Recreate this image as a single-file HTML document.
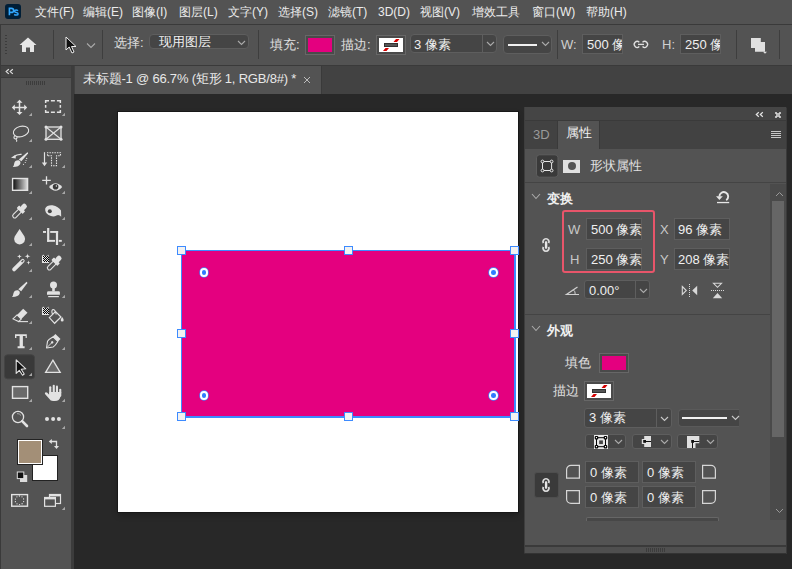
<!DOCTYPE html>
<html><head><meta charset="utf-8">
<style>
*{box-sizing:border-box;margin:0;padding:0}
html,body{width:792px;height:569px;overflow:hidden;background:#282828;font-family:"Liberation Sans",sans-serif;color:#e0e0e0}
.a{position:absolute}
.t{position:absolute;white-space:nowrap;font-size:12px;line-height:14px}
.m{color:#ececec}
#menubar{left:0;top:0;width:792px;height:24px;background:#535353}
#mline{left:0;top:24px;width:792px;height:1px;background:#3a3a3a}
#opts{left:0;top:25px;width:792px;height:40px;background:#535353}
#oline{left:0;top:64.8px;width:792px;height:1.2px;background:#3a3a3a}
#tool{left:1px;top:66px;width:70px;height:503px;background:#535353}
#toolhdr{left:1px;top:66px;width:70px;height:11.2px;background:#434343}
#tabbar{left:73.5px;top:66px;width:719px;height:28px;background:#424242}
#tab{left:74.5px;top:66px;width:246.5px;height:28px;background:#535353;border-right:1px solid #3a3a3a;width:247.5px}
#page{left:118px;top:112px;width:400px;height:400px;background:#fff;box-shadow:0 0 0 1px #181818,0 3px 6px rgba(0,0,0,0.25)}
#panel{left:524px;top:107px;width:263px;height:446px;background:#535353;border-radius:3px 3px 0 0;overflow:hidden}
</style></head><body>
<div id="menubar" class="a"></div>
<div id="mline" class="a"></div>
<div id="opts" class="a"></div>
<div id="oline" class="a"></div>
<div id="tool" class="a"></div>
<div id="toolhdr" class="a"></div>
<div id="tabbar" class="a"></div>
<div id="tab" class="a"></div>
<div id="page" class="a"></div>
<div id="panel" class="a"></div>

<!-- menu text -->
<div class="t m" style="left:35px;top:5px;font-size:12px">文件(F)</div>
<div class="t m" style="left:83px;top:5px">编辑(E)</div>
<div class="t m" style="left:132px;top:5px">图像(I)</div>
<div class="t m" style="left:179px;top:5px">图层(L)</div>
<div class="t m" style="left:228px;top:5px">文字(Y)</div>
<div class="t m" style="left:278px;top:5px">选择(S)</div>
<div class="t m" style="left:328px;top:5px">滤镜(T)</div>
<div class="t m" style="left:378px;top:5px">3D(D)</div>
<div class="t m" style="left:420px;top:5px">视图(V)</div>
<div class="t m" style="left:472px;top:5px">增效工具</div>
<div class="t m" style="left:532px;top:5px">窗口(W)</div>
<div class="t m" style="left:586px;top:5px">帮助(H)</div>

<!-- options bar -->
<div class="a" style="left:0;top:25px;width:1px;height:544px;background:#3a3a3a"></div>
<div class="a" style="left:5px;top:35px;width:2px;height:20px;background:repeating-linear-gradient(#3c3c3c 0 1px,transparent 1px 3px)"></div>
<svg class="a" style="left:19px;top:37px" width="18" height="16" viewBox="0 0 18 16"><path d="M9 0.5 L17.5 8 L15 8 L15 15 L11 15 L11 10.5 L7 10.5 L7 15 L3 15 L3 8 L0.5 8 Z" fill="#e6e6e6"/></svg>
<div class="a" style="left:53px;top:30px;width:1px;height:29px;background:#3e3e3e"></div>
<svg class="a" style="left:65px;top:36px" width="13" height="18" viewBox="0 0 13 18"><path d="M1 1 L1 14 L4.2 11 L7 17 L9 16 L6.5 10.5 L11 10.5 Z" fill="#111" stroke="#eee" stroke-width="1"/></svg>
<svg class="a" style="left:86px;top:42px" width="10" height="7" viewBox="0 0 10 7"><path d="M1 1.5 L5 5.5 L9 1.5" fill="none" stroke="#aaa" stroke-width="1.1"/></svg>
<div class="a" style="left:102px;top:30px;width:1px;height:29px;background:#3e3e3e"></div>
<div class="t" style="left:114px;top:35px;font-size:13px;line-height:15px">选择:</div>
<div class="a" style="left:149px;top:34px;width:100px;height:15px;background:#454545;border:1px solid #5e5e5e;border-radius:4px"></div>
<div class="t" style="left:159px;top:34px;font-size:13px;line-height:15px;color:#f0f0f0">现用图层</div>
<svg class="a" style="left:237px;top:40px" width="9" height="6" viewBox="0 0 9 6"><path d="M1 1 L4.5 4.5 L8 1" fill="none" stroke="#aaa" stroke-width="1.1"/></svg>
<div class="a" style="left:258px;top:30px;width:1px;height:29px;background:#3e3e3e"></div>
<div class="t" style="left:270px;top:37px;font-size:13px;line-height:15px">填充:</div>
<div class="a" style="left:305px;top:35px;width:30px;height:20px;background:#4a4a4a;border:1px solid #676767"></div>
<div class="a" style="left:308px;top:38px;width:24px;height:14px;background:#e4007f"></div>
<div class="t" style="left:341px;top:37px;font-size:13px;line-height:15px">描边:</div>
<div class="a" style="left:376px;top:35px;width:30px;height:20px;background:#4a4a4a;border:1px solid #676767"></div>
<div class="a" style="left:379px;top:38px;width:24px;height:14px;background:#fff"></div>
<svg class="a" style="left:379px;top:38px" width="24" height="14" viewBox="0 0 24 14"><rect x="5.5" y="5.5" width="13" height="3" fill="#555" stroke="#333" stroke-width="1"/><path d="M14.5 3.9 L17 1 L20.5 1 L18 3.9 Z M4 12.9 L6.5 10 L10 10 L7.5 12.9 Z" fill="#d40000"/></svg>
<div class="a" style="left:410px;top:34px;width:87px;height:19px;background:#454545;border:1px solid #5e5e5e;border-radius:4px"></div>
<div class="a" style="left:482px;top:35px;width:1px;height:17px;background:#5e5e5e"></div>
<div class="t" style="left:414px;top:37px;font-size:13px;line-height:15px;color:#f0f0f0">3 像素</div>
<svg class="a" style="left:486px;top:41px" width="9" height="6" viewBox="0 0 9 6"><path d="M1 1 L4.5 4.5 L8 1" fill="none" stroke="#aaa" stroke-width="1.1"/></svg>
<div class="a" style="left:503px;top:35px;width:49px;height:19px;background:#454545;border:1px solid #5e5e5e;border-radius:4px"></div>
<div class="a" style="left:508px;top:44px;width:29px;height:2px;background:#f0f0f0"></div>
<svg class="a" style="left:541px;top:41px" width="9" height="6" viewBox="0 0 9 6"><path d="M1 1 L4.5 4.5 L8 1" fill="none" stroke="#aaa" stroke-width="1.1"/></svg>
<div class="a" style="left:557px;top:30px;width:1px;height:29px;background:#3e3e3e"></div>
<div class="t" style="left:561px;top:37px;font-size:13px;line-height:15px;color:#cfcfcf">W:</div>
<div class="a" style="left:582px;top:34px;width:41px;height:20px;background:#454545;border:1px solid #5e5e5e;overflow:hidden"><div class="t" style="left:4px;top:2px;font-size:13px;line-height:15px;color:#f0f0f0">500 像素</div></div>
<svg class="a" style="left:630px;top:38px" width="20" height="13" viewBox="630 38 20 13"><path d="M639.3 42.2 A3 3 0 1 0 639.3 46.6 M642.5 42.2 A3 3 0 1 1 642.5 46.6" fill="none" stroke="#e0e0e0" stroke-width="1.3"/><path d="M638 44.4 H644" stroke="#e0e0e0" stroke-width="1.3"/></svg>
<div class="t" style="left:662px;top:37px;font-size:13px;line-height:15px;color:#cfcfcf">H:</div>
<div class="a" style="left:680px;top:34px;width:41px;height:20px;background:#454545;border:1px solid #5e5e5e;overflow:hidden"><div class="t" style="left:4px;top:2px;font-size:13px;line-height:15px;color:#f0f0f0">250 像素</div></div>
<div class="a" style="left:736px;top:30px;width:1px;height:29px;background:#3e3e3e"></div>
<svg class="a" style="left:748px;top:36px" width="20" height="19" viewBox="748 36 20 19"><path d="M751 38 H760.8 V42 H765 V51.7 H755 V48 H751 Z" fill="#e0e0e0"/><path d="M763 51.8 L767 51.8 L765 53.8Z" fill="#e0e0e0"/></svg>
<div class="a" style="left:779px;top:30px;width:1px;height:29px;background:#3e3e3e"></div>

<!-- toolbar header & tab -->
<div class="a" style="left:1px;top:77.2px;width:70px;height:1px;background:#3a3a3a"></div>
<svg class="a" style="left:4px;top:67px" width="12" height="10" viewBox="4 67 12 10"><path d="M8.8 69.3 L6.2 71.6 L8.8 73.9 M12.8 69.3 L10.2 71.6 L12.8 73.9" fill="none" stroke="#e0e0e0" stroke-width="1.2"/></svg>
<div class="a" style="left:26px;top:81px;width:20px;height:4px;background:repeating-linear-gradient(90deg,#3c3c3c 0 1px,transparent 1px 2px)"></div>
<div class="a" style="left:71px;top:66px;width:2.5px;height:503px;background:#3c3c3c"></div>
<div class="t" style="left:83px;top:71px;font-size:13px;line-height:15px;color:#e8e8e8;letter-spacing:-0.2px">未标题-1 @ 66.7% (矩形 1, RGB/8#) *</div>
<svg class="a" style="left:303px;top:76px" width="8" height="8" viewBox="0 0 8 8"><path d="M1 1 L7 7 M7 1 L1 7" stroke="#bbb" stroke-width="1"/></svg>

<!-- canvas shape -->
<div class="a" style="left:182px;top:251px;width:332px;height:165px;background:#e4007f"></div>
<div class="a" style="left:181px;top:250px;width:1px;height:168px;background:#3d8bff"></div>
<div class="a" style="left:181px;top:250px;width:335px;height:1px;background:#3d8bff"></div>
<div class="a" style="left:514px;top:250px;width:1.8px;height:168px;background:#3d8bff"></div>
<div class="a" style="left:181px;top:416px;width:335px;height:1.9px;background:#3d8bff"></div>
<div class="a" style="left:177px;top:246px;width:9px;height:9px;background:#f2f2f2;border:1px solid #3d8bff"></div>
<div class="a" style="left:344px;top:246px;width:9px;height:9px;background:#f2f2f2;border:1px solid #3d8bff"></div>
<div class="a" style="left:510px;top:246px;width:9px;height:9px;background:#f2f2f2;border:1px solid #3d8bff"></div>
<div class="a" style="left:177px;top:329px;width:9px;height:9px;background:#f2f2f2;border:1px solid #3d8bff"></div>
<div class="a" style="left:510px;top:329px;width:9px;height:9px;background:#f2f2f2;border:1px solid #3d8bff"></div>
<div class="a" style="left:177px;top:412px;width:9px;height:9px;background:#f2f2f2;border:1px solid #3d8bff"></div>
<div class="a" style="left:344px;top:412px;width:9px;height:9px;background:#f2f2f2;border:1px solid #3d8bff"></div>
<div class="a" style="left:510px;top:412px;width:9px;height:9px;background:#f2f2f2;border:1px solid #3d8bff"></div>
<div class="a" style="left:199.8px;top:268.2px;width:8.5px;height:8.5px;border-radius:50%;background:#2f7bff;border:2px solid #fff;box-shadow:0 0 0 0.7px #3d8bff"></div>
<div class="a" style="left:489.1px;top:268.2px;width:8.5px;height:8.5px;border-radius:50%;background:#2f7bff;border:2px solid #fff;box-shadow:0 0 0 0.7px #3d8bff"></div>
<div class="a" style="left:199.8px;top:391.1px;width:8.5px;height:8.5px;border-radius:50%;background:#2f7bff;border:2px solid #fff;box-shadow:0 0 0 0.7px #3d8bff"></div>
<div class="a" style="left:489.1px;top:391.1px;width:8.5px;height:8.5px;border-radius:50%;background:#2f7bff;border:2px solid #fff;box-shadow:0 0 0 0.7px #3d8bff"></div>
<!-- PANEL START -->
<!-- ps logo -->
<div class="a" style="left:5px;top:4px;width:16px;height:15px;background:#001e36;border-radius:3px"></div>
<svg class="a" style="left:5px;top:4px" width="16" height="15" viewBox="5 4 16 15"><path d="M9.4 15.2 V8.4 H11.4 Q13.6 8.4 13.6 10.4 Q13.6 12.4 11.4 12.4 H9.4" fill="none" stroke="#31a8ff" stroke-width="1.6"/><path d="M18 10.7 Q17.2 10 16.1 10 Q14.5 10 14.5 11.3 Q14.5 12.3 16.2 12.6 Q18.1 12.9 18.1 13.9 Q18.1 15.1 16.2 15.1 Q15 15.1 14.2 14.4" fill="none" stroke="#31a8ff" stroke-width="1.5"/></svg>
<!-- properties panel -->
<div class="a" style="left:524px;top:107px;width:263px;height:446px;background:#535353;border-radius:3px 3px 0 0"></div>
<div class="a" style="left:524px;top:107px;width:263px;height:14px;background:#454545;border-radius:3px 3px 0 0"></div>
<div class="a" style="left:524px;top:120px;width:263px;height:1px;background:#3a3a3a"></div>
<div class="a" style="left:524px;top:121px;width:263px;height:28px;background:#424242"></div>
<div class="a" style="left:557px;top:121px;width:1px;height:28px;background:#3a3a3a"></div>
<div class="a" style="left:558px;top:121px;width:41px;height:28px;background:#535353"></div>
<div class="a" style="left:599px;top:121px;width:1px;height:28px;background:#3a3a3a"></div>
<div class="a" style="left:524px;top:107px;width:1px;height:446px;background:#3e3e3e"></div>
<svg class="a" style="left:754px;top:110px" width="11" height="9" viewBox="754 110 11 9"><path d="M758.8 112.2 L756.3 114.5 L758.8 116.8 M762.8 112.2 L760.3 114.5 L762.8 116.8" fill="none" stroke="#e6e6e6" stroke-width="1.2"/></svg>
<svg class="a" style="left:774px;top:111px" width="8" height="8" viewBox="774 111 8 8"><rect x="776" y="113" width="4" height="4" fill="#bbb"/><g fill="#d8d8d8"><circle cx="776" cy="113" r="1.1"/><circle cx="780" cy="113" r="1.1"/><circle cx="776" cy="117" r="1.1"/><circle cx="780" cy="117" r="1.1"/></g></svg>
<div class="t" style="left:533px;top:127px;font-size:13px;line-height:15px;color:#9a9a9a">3D</div>
<div class="t" style="left:566px;top:125px;font-size:13px;line-height:15px;color:#f0f0f0">属性</div>
<div class="a" style="left:771px;top:131px;width:10px;height:8px;background:repeating-linear-gradient(#c8c8c8 0 1px,transparent 1px 2px)"></div>

<svg class="a" style="left:535px;top:154px" width="24" height="24" viewBox="535 154 24 24"><rect x="536.5" y="154.8" width="21.5" height="22.4" rx="3" fill="#3a3a3a" stroke="#5e5e5e" stroke-width="1"/><path d="M542.5 161.5 H551.6 V170.5 H542.5 Z" fill="none" stroke="#e8e8e8" stroke-width="1"/><g fill="#3a3a3a" stroke="#e8e8e8" stroke-width="1"><circle cx="542.5" cy="161.5" r="1.4"/><circle cx="551.6" cy="161.5" r="1.4"/><circle cx="542.5" cy="170.5" r="1.4"/><circle cx="551.6" cy="170.5" r="1.4"/></g></svg>
<div class="a" style="left:563px;top:160px;width:17px;height:13px;background:#e0e0e0"></div>
<div class="a" style="left:567.5px;top:162.3px;width:8px;height:8px;border-radius:50%;background:#555"></div>
<div class="t" style="left:590px;top:158px;font-size:13px;line-height:15px;color:#e0e0e0">形状属性</div>
<div class="a" style="left:525px;top:182px;width:262px;height:1px;background:#444"></div>

<svg class="a" style="left:531px;top:193px" width="10" height="7" viewBox="0 0 10 7"><path d="M1 1 L5 5.5 L9 1" fill="none" stroke="#aaa" stroke-width="1.1"/></svg>
<div class="t" style="left:547px;top:191px;font-size:13px;line-height:15px;color:#f0f0f0;font-weight:bold">变换</div>
<svg class="a" style="left:710px;top:186px" width="26" height="22" viewBox="0 0 26 22"><path d="M9.4 10.6 A4.4 4.4 0 1 1 16.2 14.2" fill="none" stroke="#e6e6e6" stroke-width="1.9"/><path d="M6 10.2 L12.8 10.2 L9.4 14 Z" fill="#e6e6e6"/><rect x="7" y="15.9" width="12.2" height="1.3" fill="#e6e6e6"/></svg>

<div class="a" style="left:562px;top:210px;width:93px;height:63px;border:2px solid #e8556a;border-radius:3px"></div>
<div class="t" style="left:568px;top:222px;font-size:13px;line-height:15px;color:#c8c8c8">W</div>
<div class="t" style="left:570px;top:252px;font-size:13px;line-height:15px;color:#c8c8c8">H</div>
<div class="a" style="left:586px;top:218px;width:56px;height:22px;background:#454545;border:1px solid #5e5e5e"></div>
<div class="t" style="left:591px;top:222px;font-size:13px;line-height:15px;color:#f0f0f0">500 像素</div>
<div class="a" style="left:586px;top:248px;width:56px;height:22px;background:#454545;border:1px solid #5e5e5e"></div>
<div class="t" style="left:591px;top:252px;font-size:13px;line-height:15px;color:#f0f0f0">250 像素</div>
<svg class="a" style="left:539px;top:235px" width="14" height="20" viewBox="539.0 234.6 14 20"><path d="M543.30 242.80 A3 3.1 0 1 1 548.70 242.80" fill="none" stroke="#dedede" stroke-width="1.7"/><path d="M543.30 246.40 A3 3.1 0 1 0 548.70 246.40" fill="none" stroke="#dedede" stroke-width="1.7"/><rect x="544.90" y="240.90" width="2.4" height="7.4" rx="0.8" fill="#e6e6e6"/></svg>
<div class="t" style="left:660px;top:222px;font-size:13px;line-height:15px;color:#c8c8c8">X</div>
<div class="t" style="left:660px;top:252px;font-size:13px;line-height:15px;color:#c8c8c8">Y</div>
<div class="a" style="left:674px;top:218px;width:56px;height:22px;background:#454545;border:1px solid #5e5e5e"></div>
<div class="t" style="left:678px;top:222px;font-size:13px;line-height:15px;color:#f0f0f0">96 像素</div>
<div class="a" style="left:674px;top:248px;width:56px;height:22px;background:#454545;border:1px solid #5e5e5e"></div>
<div class="t" style="left:678px;top:252px;font-size:13px;line-height:15px;color:#f0f0f0">208 像素</div>
<svg class="a" style="left:560px;top:280px" width="22" height="20" viewBox="560 280 22 20"><path d="M577.5 287 L566.5 294.5 H579" fill="none" stroke="#d0d0d0" stroke-width="1.2"/><path d="M573.3 289.8 Q575.5 291.5 575.2 294.3" fill="none" stroke="#d0d0d0" stroke-width="1"/></svg>
<div class="a" style="left:584px;top:280px;width:66px;height:19px;background:#454545;border:1px solid #5e5e5e;border-radius:3px"></div>
<div class="a" style="left:635px;top:281px;width:1px;height:17px;background:#5e5e5e"></div>
<div class="t" style="left:589px;top:283px;font-size:13px;line-height:15px;color:#f0f0f0">0.00°</div>
<svg class="a" style="left:639px;top:288px" width="9" height="6" viewBox="0 0 9 6"><path d="M1 1 L4.5 4.5 L8 1" fill="none" stroke="#aaa" stroke-width="1.1"/></svg>
<svg class="a" style="left:676px;top:278px" width="54" height="24" viewBox="676 278 54 24"><path d="M682.3 286.5 L686.3 290.5 L682.3 294.5 Z" fill="none" stroke="#d8d8d8" stroke-width="1.1"/><path d="M697.2 285.8 L692.2 290.5 L697.2 295.2 Z" fill="#d8d8d8"/><g fill="#d8d8d8"><rect x="689" y="284.0" width="1" height="1"/><rect x="689" y="286.0" width="1" height="1"/><rect x="689" y="288.0" width="1" height="1"/><rect x="689" y="290.0" width="1" height="1"/><rect x="689" y="292.0" width="1" height="1"/><rect x="689" y="294.0" width="1" height="1"/><rect x="689" y="296.0" width="1" height="1"/><rect x="711.0" y="290" width="1" height="1"/><rect x="713.0" y="290" width="1" height="1"/><rect x="715.0" y="290" width="1" height="1"/><rect x="717.0" y="290" width="1" height="1"/><rect x="719.0" y="290" width="1" height="1"/><rect x="721.0" y="290" width="1" height="1"/><rect x="723.0" y="290" width="1" height="1"/></g><path d="M713.5 283.3 L721.5 283.3 L717.5 287.3 Z" fill="none" stroke="#d8d8d8" stroke-width="1.1"/><path d="M712.8 298.2 L717.5 293 L722.2 298.2 Z" fill="#d8d8d8"/></svg>
<div class="a" style="left:525px;top:314px;width:245px;height:1px;background:#444"></div>
<svg class="a" style="left:531px;top:325px" width="10" height="7" viewBox="0 0 10 7"><path d="M1 1 L5 5.5 L9 1" fill="none" stroke="#aaa" stroke-width="1.1"/></svg>
<div class="t" style="left:547px;top:323px;font-size:13px;line-height:15px;color:#f0f0f0;font-weight:bold">外观</div>
<div class="t" style="left:565px;top:355px;font-size:13px;line-height:15px;color:#e0e0e0">填色</div>
<div class="a" style="left:599px;top:353px;width:30px;height:20px;border:1px solid #676767;background:#4a4a4a"></div>
<div class="a" style="left:602px;top:356px;width:24px;height:14px;background:#e4007f"></div>
<div class="t" style="left:553px;top:383px;font-size:13px;line-height:15px;color:#e0e0e0">描边</div>
<div class="a" style="left:584px;top:381px;width:30px;height:20px;border:1px solid #676767;background:#4a4a4a"></div>
<div class="a" style="left:587px;top:384px;width:24px;height:14px;background:#fff"></div>
<svg class="a" style="left:587px;top:384px" width="24" height="14" viewBox="0 0 24 14"><rect x="5.5" y="5.5" width="13" height="3" fill="#555" stroke="#333" stroke-width="1"/><path d="M14.5 3.9 L17 1 L20.5 1 L18 3.9 Z M4 12.9 L6.5 10 L10 10 L7.5 12.9 Z" fill="#d40000"/></svg>
<div class="a" style="left:584px;top:408px;width:88px;height:20px;background:#454545;border:1px solid #5e5e5e;border-radius:3px"></div>
<div class="a" style="left:656px;top:409px;width:1px;height:18px;background:#5e5e5e"></div>
<div class="t" style="left:589px;top:410px;font-size:13px;line-height:15px;color:#f0f0f0">3 像素</div>
<svg class="a" style="left:660px;top:416px" width="9" height="6" viewBox="0 0 9 6"><path d="M1 1 L4.5 4.5 L8 1" fill="none" stroke="#c8c8c8" stroke-width="1.1"/></svg>
<div class="a" style="left:678px;top:409px;width:61px;height:18px;background:#454545;border:1.5px solid #5a5a5a;border-right:none;border-radius:4px 0 0 4px"></div>
<div class="a" style="left:682px;top:417px;width:45px;height:2px;background:#f0f0f0"></div>
<svg class="a" style="left:731px;top:415px" width="9" height="6" viewBox="0 0 9 6"><path d="M1 1 L4.5 4.5 L8 1" fill="none" stroke="#c8c8c8" stroke-width="1.1"/></svg>
<div class="a" style="left:585px;top:434px;width:41px;height:15px;background:#454545;border:1px solid #5e5e5e;border-radius:3px"></div>
<svg class="a" style="left:594px;top:434.8px" width="14.2" height="14.2" viewBox="594 434.8 14.2 14.2"><rect x="594" y="434.8" width="14.2" height="14.2" fill="#e8e8e8"/><rect x="599.2" y="440.2" width="3.7" height="3.7" fill="#444"/><path d="M596.5 437.5 H605.5 V446.5 H596.5 Z" fill="none" stroke="#000" stroke-width="1"/><g fill="#fff" stroke="#000" stroke-width="1.2"><rect x="595.3" y="436.3" width="2.4" height="2.4" rx="0.6"/><rect x="604.3" y="436.3" width="2.4" height="2.4" rx="0.6"/><rect x="595.3" y="445.3" width="2.4" height="2.4" rx="0.6"/><rect x="604.3" y="445.3" width="2.4" height="2.4" rx="0.6"/></g></svg>
<svg class="a" style="left:614px;top:439px" width="9" height="6" viewBox="0 0 9 6"><path d="M1 1 L4.5 4.5 L8 1" fill="none" stroke="#aaa" stroke-width="1.1"/></svg>
<div class="a" style="left:632px;top:434px;width:40px;height:15px;background:#454545;border:1px solid #5e5e5e;border-radius:3px"></div>
<svg class="a" style="left:638px;top:432px" width="16" height="18" viewBox="638 432 16 18"><path d="M644.2 436 H651 V447 H644.2 V444 H641.8 V439 H644.2 Z" fill="#e0e0e0"/><rect x="643.2" y="440" width="2.8" height="2.8" fill="#111"/><rect x="645" y="441" width="6" height="1" fill="#111"/></svg>
<svg class="a" style="left:660px;top:439px" width="9" height="6" viewBox="0 0 9 6"><path d="M1 1 L4.5 4.5 L8 1" fill="none" stroke="#aaa" stroke-width="1.1"/></svg>
<div class="a" style="left:677px;top:434px;width:41px;height:15px;background:#454545;border:1px solid #5e5e5e;border-radius:3px"></div>
<svg class="a" style="left:686px;top:435px" width="14" height="14" viewBox="686 435 14 14"><path d="M687 436 H699.3 V443.3 H695.5 V448 H687 Z" fill="#e0e0e0"/><rect x="691.2" y="440" width="2.8" height="2.8" fill="#111"/><rect x="693" y="441" width="6.3" height="1" fill="#111"/><rect x="692" y="442" width="1" height="6" fill="#111"/></svg>
<svg class="a" style="left:706px;top:439px" width="9" height="6" viewBox="0 0 9 6"><path d="M1 1 L4.5 4.5 L8 1" fill="none" stroke="#aaa" stroke-width="1.1"/></svg>
<div class="a" style="left:534px;top:471.5px;width:24.5px;height:26px;background:#3a3a3a;border:1px solid #4e4e4e;border-radius:3px"></div>
<svg class="a" style="left:539px;top:475px" width="14" height="20" viewBox="539.0 474.6 14 20"><path d="M543.30 482.80 A3 3.1 0 1 1 548.70 482.80" fill="none" stroke="#dedede" stroke-width="1.7"/><path d="M543.30 486.40 A3 3.1 0 1 0 548.70 486.40" fill="none" stroke="#dedede" stroke-width="1.7"/><rect x="544.90" y="480.90" width="2.4" height="7.4" rx="0.8" fill="#e6e6e6"/></svg>
<svg class="a" style="left:565px;top:464px" width="16" height="16" viewBox="0 0 16 16"><path d="M1.6 14.2 V5.8 A4.4 4.4 0 0 1 6 1.4 H14.4 V14.2 Z" fill="none" stroke="#d6d6d6" stroke-width="1.2"/></svg>
<svg class="a" style="left:701px;top:464px" width="16" height="16" viewBox="0 0 16 16"><path d="M14.4 14.2 V5.8 A4.4 4.4 0 0 0 10 1.4 H1.6 V14.2 Z" fill="none" stroke="#d6d6d6" stroke-width="1.2"/></svg>
<svg class="a" style="left:565px;top:489px" width="16" height="16" viewBox="0 0 16 16"><path d="M1.6 1.6 V10 A4.4 4.4 0 0 0 6 14.4 H14.4 V1.6 Z" fill="none" stroke="#d6d6d6" stroke-width="1.2"/></svg>
<svg class="a" style="left:701px;top:489px" width="16" height="16" viewBox="0 0 16 16"><path d="M14.4 1.6 V10 A4.4 4.4 0 0 1 10 14.4 H1.6 V1.6 Z" fill="none" stroke="#d6d6d6" stroke-width="1.2"/></svg>
<div class="a" style="left:585px;top:461px;width:54px;height:22px;background:#454545;border:1px solid #5e5e5e"></div>
<div class="t" style="left:590px;top:465px;font-size:13px;line-height:15px;color:#f0f0f0">0 像素</div>
<div class="a" style="left:642px;top:461px;width:54px;height:22px;background:#454545;border:1px solid #5e5e5e"></div>
<div class="t" style="left:647px;top:465px;font-size:13px;line-height:15px;color:#f0f0f0">0 像素</div>
<div class="a" style="left:585px;top:486px;width:54px;height:22px;background:#454545;border:1px solid #5e5e5e"></div>
<div class="t" style="left:590px;top:490px;font-size:13px;line-height:15px;color:#f0f0f0">0 像素</div>
<div class="a" style="left:642px;top:486px;width:54px;height:22px;background:#454545;border:1px solid #5e5e5e"></div>
<div class="t" style="left:647px;top:490px;font-size:13px;line-height:15px;color:#f0f0f0">0 像素</div>
<div class="a" style="left:586px;top:517px;width:133px;height:4px;background:#474747;border:1px solid #666;border-bottom:none;border-radius:2px 2px 0 0"></div>
<!-- scrollbar -->
<div class="a" style="left:770px;top:184px;width:16px;height:336px;background:#4a4a4a"></div>
<div class="a" style="left:772px;top:201px;width:12px;height:236px;background:#666"></div>
<svg class="a" style="left:775px;top:191px" width="9" height="6" viewBox="0 0 9 6"><path d="M1 5 L4.5 1.5 L8 5" fill="none" stroke="#999" stroke-width="1"/></svg>
<svg class="a" style="left:775px;top:508px" width="9" height="6" viewBox="0 0 9 6"><path d="M1 1 L4.5 4.5 L8 1" fill="none" stroke="#999" stroke-width="1"/></svg>
<!-- panel footer -->
<div class="a" style="left:525px;top:545px;width:261px;height:1.5px;background:#3a3a3a"></div>
<div class="a" style="left:525px;top:546.5px;width:261px;height:6.5px;background:#4f4f4f"></div>
<div class="a" style="left:524px;top:553px;width:263px;height:1px;background:#333"></div>
<div class="a" style="left:786px;top:108px;width:1px;height:446px;background:#3a3a3a"></div>
<div class="a" style="left:646px;top:547.5px;width:20px;height:4px;background:repeating-linear-gradient(90deg,#3c3c3c 0 1px,transparent 1px 2px)"></div>
<!-- PANEL END -->
<!-- TOOLBAR START -->
<svg class="a" style="left:0;top:65px" width="72" height="504" viewBox="0 65 72 504">
<g stroke="#e2e2e2" stroke-width="1.5" fill="none"><path d="M19.5 102 V113 M14 107.4 H25"/></g>
<g fill="#e2e2e2"><path d="M19.5 99.8 L22.5 102.8 L16.5 102.8Z"/><path d="M19.5 115 L22.5 112 L16.5 112Z"/><path d="M11.8 107.4 L14.8 104.4 L14.8 110.4Z"/><path d="M27.2 107.4 L24.2 104.4 L24.2 110.4Z"/></g>
<path d="M32.0 112.8 L32.0 116.0 L28.8 116.0 Z" fill="#a8a8a8"/>
<g stroke="#e2e2e2" stroke-width="1.5" fill="none"><path d="M45.65 103 V100.65 H49 M50.9 100.65 H54.9 M56.9 100.65 H60.35 V103 M60.35 105.1 V107.8 M60.35 109.9 V112.25 H56.9 M54.9 112.25 H50.9 M49 112.25 H45.65 V109.9 M45.65 107.8 V105.1"/></g>
<path d="M65.0 112.8 L65.0 116.0 L61.8 116.0 Z" fill="#a8a8a8"/>
<ellipse cx="21" cy="131.5" rx="7.8" ry="5.2" transform="rotate(-14 21 131.5)" fill="none" stroke="#e2e2e2" stroke-width="1.1"/>
<path d="M14.5 136 Q13 138.5 15.5 139 Q18 138.2 16.5 136.5 M16 139 Q17.3 140.5 16.5 141.8" fill="none" stroke="#e2e2e2" stroke-width="1.1"/>
<path d="M32.0 138.8 L32.0 142.0 L28.8 142.0 Z" fill="#a8a8a8"/>
<rect x="46" y="127" width="15" height="12.3" fill="#626262" stroke="#e2e2e2" stroke-width="1.3"/>
<path d="M46 127 L61 139.3 M61 127 L46 139.3" stroke="#e2e2e2" stroke-width="1.1"/>
<g fill="#e2e2e2"><circle cx="46" cy="127" r="1.5"/><circle cx="61" cy="127" r="1.5"/><circle cx="46" cy="139.3" r="1.5"/><circle cx="61" cy="139.3" r="1.5"/></g>
<path d="M27.4 152.2 Q28.3 152.6 28 153.5 L21.4 161.3 L18.8 159.6 Z" fill="#e2e2e2"/>
<path d="M18.6 160.3 Q21 161 20.3 163.8 Q19.3 166.9 12.8 167.1 Q14 165.8 14.2 163.6 Q14.8 160.1 18.6 160.3Z" fill="#e2e2e2"/>
<path d="M21.6 154.4 Q17 154 14 156.8" fill="none" stroke="#e2e2e2" stroke-width="1.2"/><path d="M11 157.8 L15.5 154.8 L15.8 158.5Z" fill="#e2e2e2"/>
<g fill="#e2e2e2"><circle cx="26.7" cy="158.4" r="0.6"/><circle cx="26" cy="160.5" r="0.6"/><circle cx="25.3" cy="162.5" r="0.6"/><circle cx="23.5" cy="164.3" r="0.6"/></g>
<path d="M32.0 164.8 L32.0 168.0 L28.8 168.0 Z" fill="#a8a8a8"/>
<path d="M44.5 152.2 V163.5" stroke="#e2e2e2" stroke-width="1.2"/><path d="M41.8 162.5 L47.2 162.5 L44.5 166.3Z" fill="#e2e2e2"/>
<path d="M47.5 155.8 V152.7 H60.5 V155.8 H56.5 V165.7 H51.5 V155.8 Z" fill="none" stroke="#e2e2e2" stroke-width="1.1" stroke-dasharray="1.5 1"/>
<path d="M65.0 164.8 L65.0 168.0 L61.8 168.0 Z" fill="#a8a8a8"/>
<defs><linearGradient id="gr" x1="0" x2="1"><stop offset="0" stop-color="#0a0a0a"/><stop offset="1" stop-color="#e0e0e0"/></linearGradient></defs>
<rect x="12.6" y="178.5" width="15" height="11.8" fill="url(#gr)" stroke="#e2e2e2" stroke-width="1.4"/>
<path d="M32.0 190.8 L32.0 194.0 L28.8 194.0 Z" fill="#a8a8a8"/>
<path d="M46.5 176.2 V184.6 M42.2 180.4 H50.8" stroke="#e2e2e2" stroke-width="1.3"/>
<path d="M49 187 Q55.5 179.5 62.2 187 Q55.5 194.5 49 187Z" fill="#e2e2e2"/><circle cx="55.6" cy="186.7" r="2.8" fill="#3a3a3a"/><circle cx="56.4" cy="186.1" r="0.75" fill="#e2e2e2"/>
<path d="M65.0 190.8 L65.0 194.0 L61.8 194.0 Z" fill="#a8a8a8"/>
<g transform="translate(13.3 217.3) rotate(-45)"><rect x="0" y="-2" width="10.5" height="4" rx="2" fill="none" stroke="#e2e2e2" stroke-width="1.1"/><rect x="9" y="-4.2" width="3.6" height="8.4" rx="0.6" fill="#e2e2e2"/><rect x="11.5" y="-2.6" width="6.5" height="5.2" rx="2.4" fill="#e2e2e2"/></g>
<path d="M32.0 216.8 L32.0 220.0 L28.8 220.0 Z" fill="#a8a8a8"/>
<path d="M45.2 208.5 Q47 204.8 52.5 205.3 Q58.5 206.5 61 210.5 L61.2 216.8 Q59 214.3 56.5 215.5 Q53 217.5 48.5 215 Q44.8 212.5 45.2 208.5Z" fill="#e2e2e2"/><circle cx="49.8" cy="211.2" r="2" fill="#444"/>
<path d="M65.0 216.8 L65.0 220.0 L61.8 220.0 Z" fill="#a8a8a8"/>
<path d="M19.6 229 Q22.5 233.5 24.5 236.5 Q26 239.5 24.3 242 Q22.3 244.4 19.6 244.4 Q16.9 244.4 14.9 242 Q13.2 239.5 14.7 236.5 Q16.7 233.5 19.6 229Z" fill="#e2e2e2"/>
<path d="M32.0 242.8 L32.0 246.0 L28.8 246.0 Z" fill="#a8a8a8"/>
<g fill="#e2e2e2"><rect x="47.1" y="228" width="2.2" height="13.8"/><rect x="47.1" y="239.9" width="7.9" height="1.9"/><rect x="50.2" y="231" width="7.9" height="1.9"/><rect x="55.9" y="231" width="2.2" height="14"/><rect x="43" y="231" width="3" height="1.9"/><rect x="58.8" y="239.9" width="3" height="1.9"/></g>
<path d="M65.0 242.8 L65.0 246.0 L61.8 246.0 Z" fill="#a8a8a8"/>
<g transform="translate(13.8 269.7) rotate(-45)"><rect x="-1.5" y="-1.9" width="16" height="3.8" rx="1.9" fill="#e2e2e2"/><rect x="11" y="-0.7" width="2.5" height="1.4" fill="#555"/></g>
<path d="M19.4 254.1 Q19.4 256.5 21.8 256.5 Q19.4 256.5 19.4 258.9 Q19.4 256.5 17.0 256.5 Q19.4 256.5 19.4 254.1 Z" fill="#e2e2e2"/>
<path d="M27.5 253.3 Q27.5 256.3 30.5 256.3 Q27.5 256.3 27.5 259.3 Q27.5 256.3 24.5 256.3 Q27.5 256.3 27.5 253.3 Z" fill="#e2e2e2"/>
<path d="M28.5 260.4 Q28.5 262.6 30.7 262.6 Q28.5 262.6 28.5 264.8 Q28.5 262.6 26.3 262.6 Q28.5 262.6 28.5 260.4 Z" fill="#e2e2e2"/>
<path d="M32.0 268.8 L32.0 272.0 L28.8 272.0 Z" fill="#a8a8a8"/>
<g><path d="M42.0 256.1 L43.2 254.6 L44.5 256.1 L47.0 256.1 L48.5 254.6 L49.0 263.0 L42.0 263.0 Z" fill="#e2e2e2"/><rect x="43" y="256" width="1" height="1" fill="#000"/><rect x="43" y="258" width="1" height="1" fill="#000"/><rect x="43" y="260" width="1" height="1" fill="#000"/><rect x="44" y="257" width="1" height="1" fill="#000"/><rect x="44" y="259" width="1" height="1" fill="#000"/><rect x="44" y="261" width="1" height="1" fill="#000"/><rect x="45" y="256" width="1" height="1" fill="#000"/><rect x="45" y="258" width="1" height="1" fill="#000"/><rect x="45" y="260" width="1" height="1" fill="#000"/><rect x="46" y="257" width="1" height="1" fill="#000"/><rect x="46" y="259" width="1" height="1" fill="#000"/><rect x="46" y="261" width="1" height="1" fill="#000"/><rect x="47" y="256" width="1" height="1" fill="#000"/><rect x="47" y="258" width="1" height="1" fill="#000"/><rect x="47" y="260" width="1" height="1" fill="#000"/><rect x="48" y="257" width="1" height="1" fill="#000"/><rect x="48" y="259" width="1" height="1" fill="#000"/><rect x="48" y="261" width="1" height="1" fill="#000"/></g>
<g transform="translate(48.0 269.3) rotate(-45)"><rect x="0" y="-2" width="10.5" height="4" rx="2" fill="none" stroke="#e2e2e2" stroke-width="1.1"/><rect x="9" y="-4.2" width="3.6" height="8.4" rx="0.6" fill="#e2e2e2"/><rect x="11.5" y="-2.6" width="6.5" height="5.2" rx="2.4" fill="#e2e2e2"/></g>
<path d="M26.6 281.8 Q27.6 282.2 27.2 283.2 L21.2 291.2 L18.3 289.3 Z" fill="#e2e2e2"/>
<path d="M17.8 290.2 Q20.3 290.8 19.7 293.6 Q18.8 296.8 12 297.1 Q13.2 295.8 13.4 293.6 Q14 290 17.8 290.2Z" fill="#e2e2e2"/>
<path d="M32.0 294.8 L32.0 298.0 L28.8 298.0 Z" fill="#a8a8a8"/>
<circle cx="53.5" cy="284.9" r="3.5" fill="#e2e2e2"/><rect x="52.2" y="287" width="2.6" height="4.5" fill="#e2e2e2"/><path d="M47 294.8 V292.5 Q47 291.2 48.5 291.2 H58.5 Q59.9 291.2 59.9 292.5 V294.8Z" fill="#e2e2e2"/><rect x="48.2" y="296" width="10.7" height="1.2" fill="#e2e2e2"/>
<path d="M65.0 294.8 L65.0 298.0 L61.8 298.0 Z" fill="#a8a8a8"/>
<path d="M23.2 308.7 L27.5 312.8 L21.3 319 L17 314.9Z" fill="#e2e2e2"/>
<path d="M17 314.9 L21.3 319 L18.6 321.6 L13 318.9Z" fill="none" stroke="#e2e2e2" stroke-width="1.1"/><path d="M18.2 321.6 H28" stroke="#e2e2e2" stroke-width="1.1"/>
<path d="M32.0 320.8 L32.0 324.0 L28.8 324.0 Z" fill="#a8a8a8"/>
<g><path d="M42.0 308.1 L43.2 306.6 L44.5 308.1 L47.0 308.1 L48.5 306.6 L49.0 315.0 L42.0 315.0 Z" fill="#e2e2e2"/><rect x="43" y="308" width="1" height="1" fill="#000"/><rect x="43" y="310" width="1" height="1" fill="#000"/><rect x="43" y="312" width="1" height="1" fill="#000"/><rect x="44" y="309" width="1" height="1" fill="#000"/><rect x="44" y="311" width="1" height="1" fill="#000"/><rect x="44" y="313" width="1" height="1" fill="#000"/><rect x="45" y="308" width="1" height="1" fill="#000"/><rect x="45" y="310" width="1" height="1" fill="#000"/><rect x="45" y="312" width="1" height="1" fill="#000"/><rect x="46" y="309" width="1" height="1" fill="#000"/><rect x="46" y="311" width="1" height="1" fill="#000"/><rect x="46" y="313" width="1" height="1" fill="#000"/><rect x="47" y="308" width="1" height="1" fill="#000"/><rect x="47" y="310" width="1" height="1" fill="#000"/><rect x="47" y="312" width="1" height="1" fill="#000"/><rect x="48" y="309" width="1" height="1" fill="#000"/><rect x="48" y="311" width="1" height="1" fill="#000"/><rect x="48" y="313" width="1" height="1" fill="#000"/></g>
<path d="M49.3 317.6 L55.5 311.6 L61 317 L54.6 323.3Z" fill="none" stroke="#e2e2e2" stroke-width="1.2"/>
<path d="M52.5 314.2 Q51 310.5 53 309.5 Q55 309.2 56.3 314.5" fill="none" stroke="#e2e2e2" stroke-width="1.1"/><circle cx="62.2" cy="320" r="1.5" fill="#e2e2e2"/><path d="M62.2 317 L61 319 L63.4 319Z" fill="#e2e2e2"/>
<path d="M15 334.3 H26.8 V338 H25.6 V336 H22.9 V346.3 H24.6 V348.2 H17.6 V346.3 H19.6 V336 H16.4 V338 H15Z" fill="#e2e2e2"/>
<path d="M32.0 346.8 L32.0 350.0 L28.8 350.0 Z" fill="#a8a8a8"/>
<g transform="translate(52.6 341.9) rotate(-45)"><path d="M-8.6 0 L-3.2 -4 Q-1 -4.6 4 -3.3 L4 3.3 Q-1 4.6 -3.2 4 Z" fill="none" stroke="#e2e2e2" stroke-width="1.1" stroke-linejoin="round"/><rect x="4" y="-3.6" width="3.6" height="7.2" fill="#e2e2e2"/><path d="M-8 0 H-1.5" stroke="#e2e2e2" stroke-width="0.9"/><circle cx="-0.6" cy="0" r="1.2" fill="#e2e2e2"/></g>
<path d="M65.0 346.8 L65.0 350.0 L61.8 350.0 Z" fill="#a8a8a8"/>
<rect x="4.5" y="354.8" width="30" height="24" rx="3" fill="#393939" stroke="#444" stroke-width="1"/>
<path d="M16.2 359.8 L16.2 373.4 L19.3 370.3 L22.5 375.2 L24.2 374 L21.2 369.2 L25.8 368.8 Z" fill="#111" stroke="#e2e2e2" stroke-width="1.1" stroke-linejoin="round"/>
<path d="M32.0 372.8 L32.0 376.0 L28.8 376.0 Z" fill="#a8a8a8"/>
<path d="M52.9 360.2 L60.2 372.3 H45.6 Z" fill="#6a6a6a" stroke="#e2e2e2" stroke-width="1.3"/>
<rect x="12.5" y="386.6" width="15.2" height="11.7" fill="#6a6a6a" stroke="#e2e2e2" stroke-width="1.4"/>
<path d="M32.0 398.8 L32.0 402.0 L28.8 402.0 Z" fill="#a8a8a8"/>
<g fill="#e2e2e2"><rect x="49.2" y="386.3" width="2.1" height="9" rx="1.05"/><rect x="52.7" y="384.8" width="2.1" height="10" rx="1.05"/><rect x="55.9" y="385.6" width="2.1" height="10" rx="1.05"/><rect x="59.2" y="388.8" width="2.1" height="8" rx="1.05"/><path d="M49.2 392 H61.3 L60.5 396.5 Q59.5 401 55 401 H53 Q50.5 401 49 398.5 L45.2 394.2 Q44.4 393 45.3 392.4 Q46.3 391.8 47.3 392.8 L49.2 394.8 Z"/></g>
<path d="M65.0 398.8 L65.0 402.0 L61.8 402.0 Z" fill="#a8a8a8"/>
<circle cx="18" cy="417" r="5.6" fill="none" stroke="#e2e2e2" stroke-width="1.3"/><path d="M22.2 421.2 L27 426" stroke="#e2e2e2" stroke-width="2.6" stroke-linecap="round"/><path d="M17 413.6 Q19.5 413.3 21 415.5" fill="none" stroke="#bbb" stroke-width="0.8"/>
<g fill="#e2e2e2"><circle cx="47" cy="419" r="2"/><circle cx="53.1" cy="419" r="2"/><circle cx="58.9" cy="419" r="2"/></g>
<path d="M65.0 425.8 L65.0 429.0 L61.8 429.0 Z" fill="#a8a8a8"/>
<rect x="32.5" y="455.5" width="25" height="25" fill="#fff" stroke="#222" stroke-width="1"/>
<rect x="17.5" y="439.5" width="25" height="25" fill="#a38f77" stroke="#222" stroke-width="1"/><rect x="18.5" y="440.5" width="23" height="23" fill="none" stroke="#fff" stroke-width="1"/>
<path d="M51 441.5 H56.5 V446" fill="none" stroke="#e2e2e2" stroke-width="1.3"/><path d="M48.8 441.5 L51.8 439 L51.8 444Z" fill="#e2e2e2"/><path d="M56.5 449 L54 446 L59 446Z" fill="#e2e2e2"/>
<rect x="20" y="475" width="7.2" height="7" fill="#dcdcdc"/><rect x="17.3" y="472" width="6.5" height="6.6" fill="#111" stroke="#dcdcdc" stroke-width="1"/>
<rect x="11.7" y="494.6" width="15.8" height="11.6" fill="none" stroke="#e2e2e2" stroke-width="1.4"/>
<g fill="#e2e2e2"><circle cx="23.61" cy="501.57" r="0.65"/><circle cx="22.08" cy="503.74" r="0.65"/><circle cx="19.56" cy="504.60" r="0.65"/><circle cx="17.02" cy="503.81" r="0.65"/><circle cx="15.43" cy="501.69" r="0.65"/><circle cx="15.39" cy="499.03" r="0.65"/><circle cx="16.92" cy="496.86" r="0.65"/><circle cx="19.44" cy="496.00" r="0.65"/><circle cx="21.98" cy="496.79" r="0.65"/><circle cx="23.57" cy="498.91" r="0.65"/></g>
<rect x="49.5" y="494.5" width="11" height="9" fill="none" stroke="#e2e2e2" stroke-width="1.2"/><rect x="49" y="494" width="12" height="2.4" fill="#e2e2e2"/>
<rect x="44.6" y="497.5" width="10.8" height="8.8" fill="#535353" stroke="#e2e2e2" stroke-width="1.2"/><rect x="44" y="497" width="12" height="2.4" fill="#e2e2e2"/>
<path d="M65.0 506.8 L65.0 510.0 L61.8 510.0 Z" fill="#a8a8a8"/>
</svg>
<!-- TOOLBAR END -->
</body></html>
